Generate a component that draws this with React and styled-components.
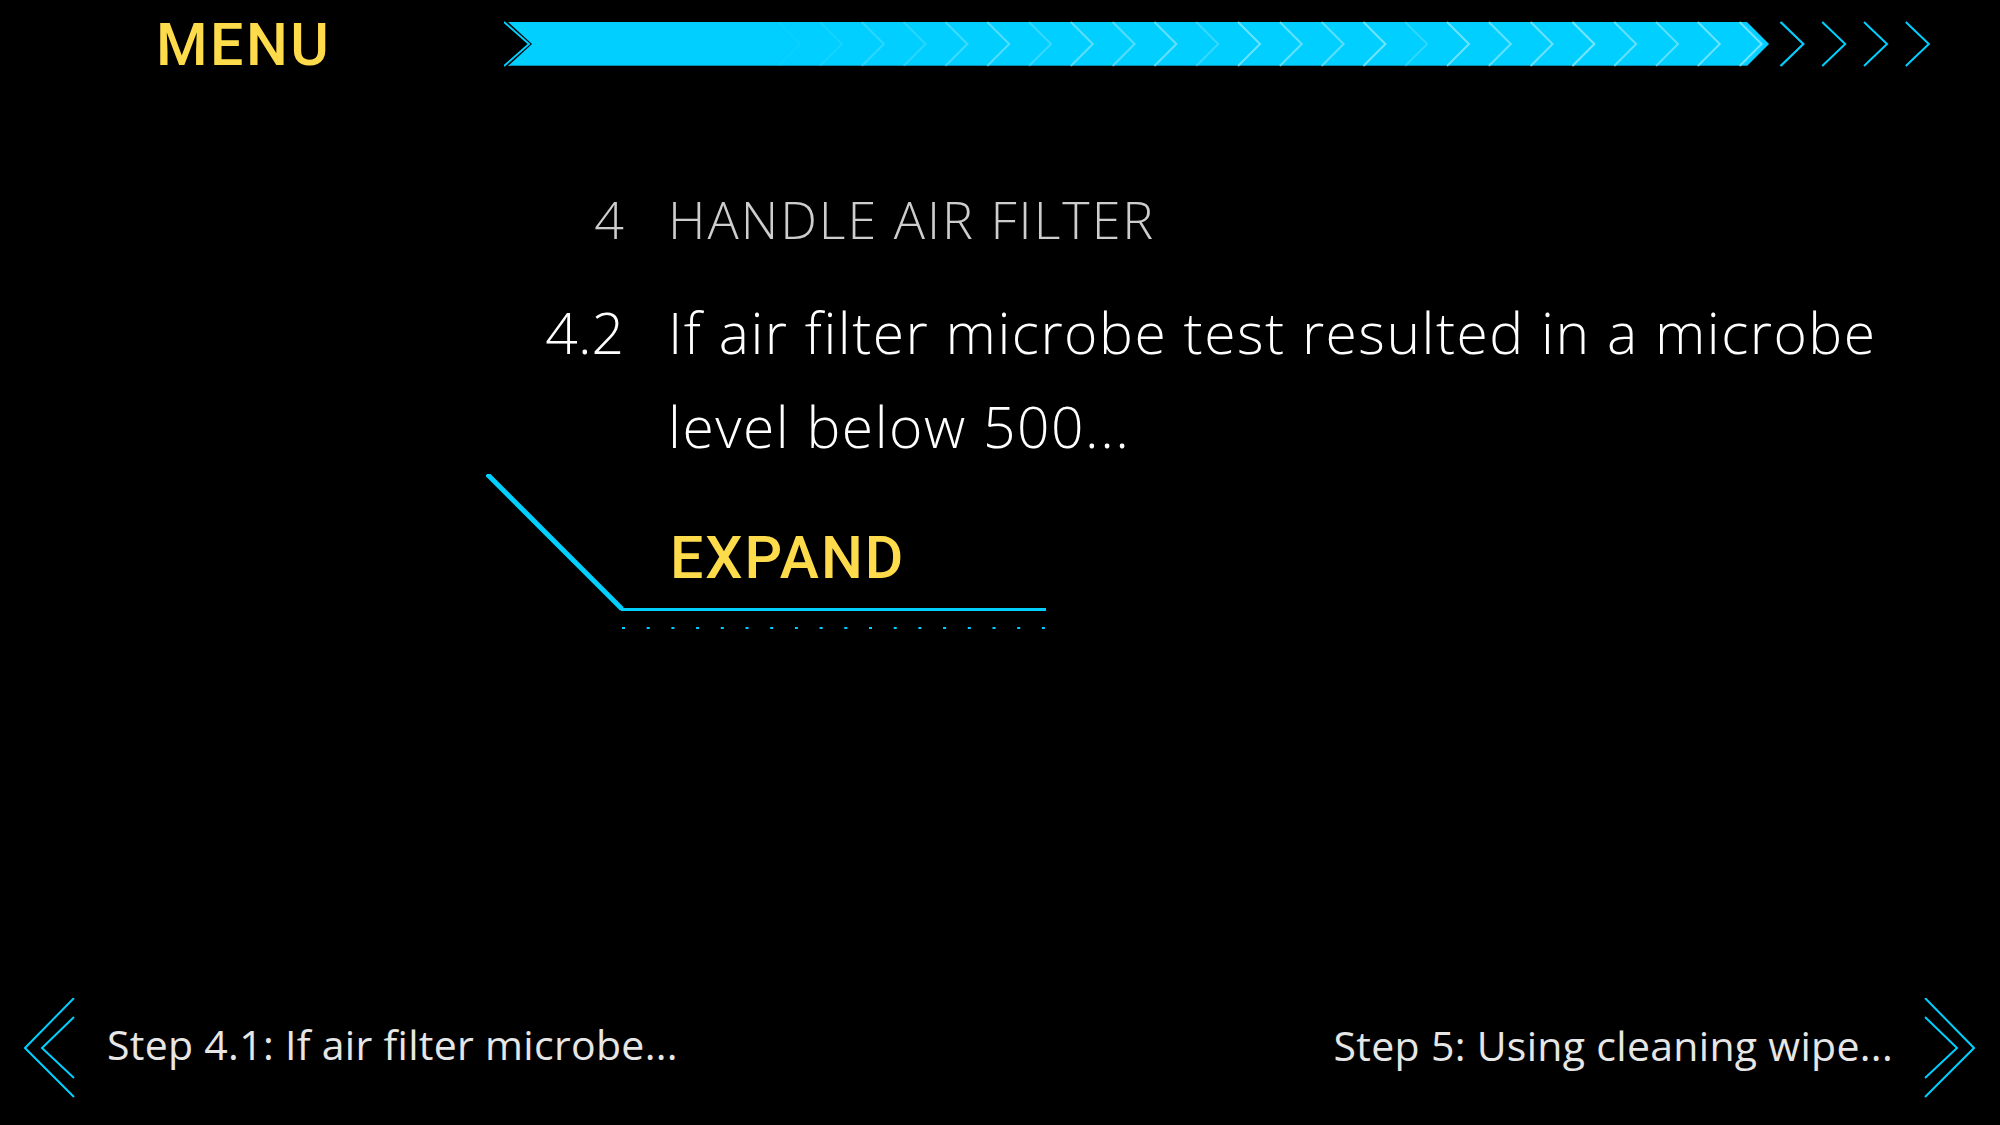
import React from 'react';
import styled, { createGlobalStyle } from 'styled-components';

const CYAN = '#00cfff';
const YELLOW = '#fddb4b';

const GlobalStyle = createGlobalStyle`
  html, body {
    margin: 0;
    padding: 0;
    background: #000;
  }
`;

const Screen = styled.div`
  width: 2000px;
  height: 1125px;
  background: #000;
  display: flex;
  flex-direction: column;
  overflow: hidden;
  box-sizing: border-box;
  font-family: 'Open Sans', 'Noto Sans', sans-serif;
`;

const Header = styled.header`
  display: flex;
  align-items: center;
  height: 88px;
`;

const MenuButton = styled.button`
  width: 504px;
  box-sizing: border-box;
  padding: 0 0 0 156px;
  border: none;
  background: none;
  text-align: left;
  font-family: Roboto, 'DejaVu Sans', sans-serif;
  font-weight: 500;
  font-size: 59px;
  line-height: 1;
  letter-spacing: 2.5px;
  color: ${YELLOW};
  cursor: pointer;
`;

const Content = styled.main`
  padding-left: 486px;
  margin-top: 96px;
  display: flex;
  flex-direction: column;
`;

const StepRow = styled.div`
  display: grid;
  grid-template-columns: 138px 1fr;
  column-gap: 44px;
  font-weight: 300;
  font-size: ${(p) => (p.$heading ? '52px' : '57px')};
  line-height: ${(p) => (p.$heading ? '70px' : '94px')};
  color: ${(p) => (p.$heading ? '#cdcdcd' : '#ffffff')};
  margin-top: ${(p) => (p.$heading ? '0' : '31px')};
`;

const StepNumber = styled.span`
  text-align: right;
`;

const StepText = styled.span`
  max-width: 1280px;
  letter-spacing: ${(p) => (p.$heading ? '2px' : '1.5px')};
`;

const ExpandButton = styled.button`
  position: relative;
  margin-top: 1px;
  width: 560px;
  height: 136px;
  box-sizing: border-box;
  padding: 0 0 23px 184px;
  border: none;
  background: none;
  display: flex;
  align-items: flex-end;
  font-family: Roboto, 'DejaVu Sans', sans-serif;
  font-weight: 500;
  font-size: 59px;
  line-height: 1;
  letter-spacing: 2px;
  color: ${YELLOW};
  cursor: pointer;
`;

const ExpandFrame = styled.svg`
  position: absolute;
  left: 0;
  top: 0;
  pointer-events: none;
`;

const Footer = styled.footer`
  margin-top: auto;
  display: flex;
  justify-content: space-between;
  align-items: center;
  height: 100px;
  padding: 0 25px 27px 24px;
`;

const NavLink = styled.a`
  display: flex;
  align-items: center;
  gap: ${(p) => (p.$next ? '30px' : '31px')};
  color: #e6e6e6;
  font-size: 41px;
  font-weight: 400;
  letter-spacing: 0.3px;
  text-decoration: none;
  cursor: pointer;
`;

const NavLabel = styled.span`
  padding-bottom: ${(p) => (p.$next ? '6px' : '8px')};
`;

// chevron pattern on the progress bar; opacity varies a bit per chevron
const innerOpacity = [0.05, 0.12, 0.25, 0.22, 0.35, 0.45, 0.3, 0.5, 0.45, 0.55, 0.3, 0.6, 0.55, 0.5, 0.62, 0.25, 0.6, 0.55, 0.6, 0.65, 0.55, 0.5, 0.6, 0.62, 0.3];

function ProgressTrack() {
  const start = 338 - 41.8;
  const inner = innerOpacity.map((o, i) => ({ tip: start + 41.8 * i, o }));
  const outer = [0, 1, 2, 3].map((i) => 338 + 41.8 * (23 + i));
  return (
    <svg width="1428" height="46" viewBox="0 0 1428 46">
      <polyline points="0,1 25,23 0,45" fill="none" stroke={CYAN} strokeWidth="2" />
      <polygon points="4,1 1243,1 1265,23 1243,45 4,45 28,23" fill={CYAN} />
      <line x1="6" y1="44.5" x2="1243" y2="44.5" stroke="#0b8fb3" strokeWidth="1" />
      {inner.map(({ tip, o }, i) => (
        <polyline
          key={i}
          points={`${tip - 22},1 ${tip},23 ${tip - 22},45`}
          fill="none"
          stroke="#b5efff"
          strokeOpacity={o}
          strokeWidth="2"
        />
      ))}
      {outer.map((tip, i) => (
        <polyline
          key={i}
          points={`${tip - 23},1 ${tip},23 ${tip - 23},45`}
          fill="none"
          stroke={CYAN}
          strokeWidth="2"
        />
      ))}
    </svg>
  );
}

function DoubleChevron({ flip }) {
  return (
    <svg width="52" height="100" viewBox="0 0 52 100" style={flip ? { transform: 'scaleX(-1)' } : undefined}>
      <polyline points="50,0 1,50 50,99" fill="none" stroke={CYAN} strokeWidth="2" />
      <polyline points="50,19 18,50 50,80" fill="none" stroke={CYAN} strokeWidth="2" />
    </svg>
  );
}

export default function App() {
  return (
    <Screen>
      <GlobalStyle />
      <Header>
        <MenuButton>MENU</MenuButton>
        <ProgressTrack />
      </Header>

      <Content>
        <StepRow $heading>
          <StepNumber>4</StepNumber>
          <StepText $heading>HANDLE AIR FILTER</StepText>
        </StepRow>
        <StepRow>
          <StepNumber>4.2</StepNumber>
          <StepText>If air filter microbe test resulted in a microbe level below 500...</StepText>
        </StepRow>
        <ExpandButton>
          <ExpandFrame width="562" height="160" viewBox="0 0 562 160">
            <line x1="1" y1="0" x2="136" y2="135" stroke={CYAN} strokeWidth="5" />
            <line x1="135" y1="135.5" x2="560" y2="135.5" stroke={CYAN} strokeWidth="3" />
            <line x1="136" y1="154" x2="559" y2="154" stroke={CYAN} strokeWidth="2" strokeDasharray="3 21.7" />
          </ExpandFrame>
          EXPAND
        </ExpandButton>
      </Content>

      <Footer>
        <NavLink>
          <DoubleChevron />
          <NavLabel>Step 4.1: If air filter microbe...</NavLabel>
        </NavLink>
        <NavLink $next>
          <NavLabel $next>Step 5: Using cleaning wipe...</NavLabel>
          <DoubleChevron flip />
        </NavLink>
      </Footer>
    </Screen>
  );
}
